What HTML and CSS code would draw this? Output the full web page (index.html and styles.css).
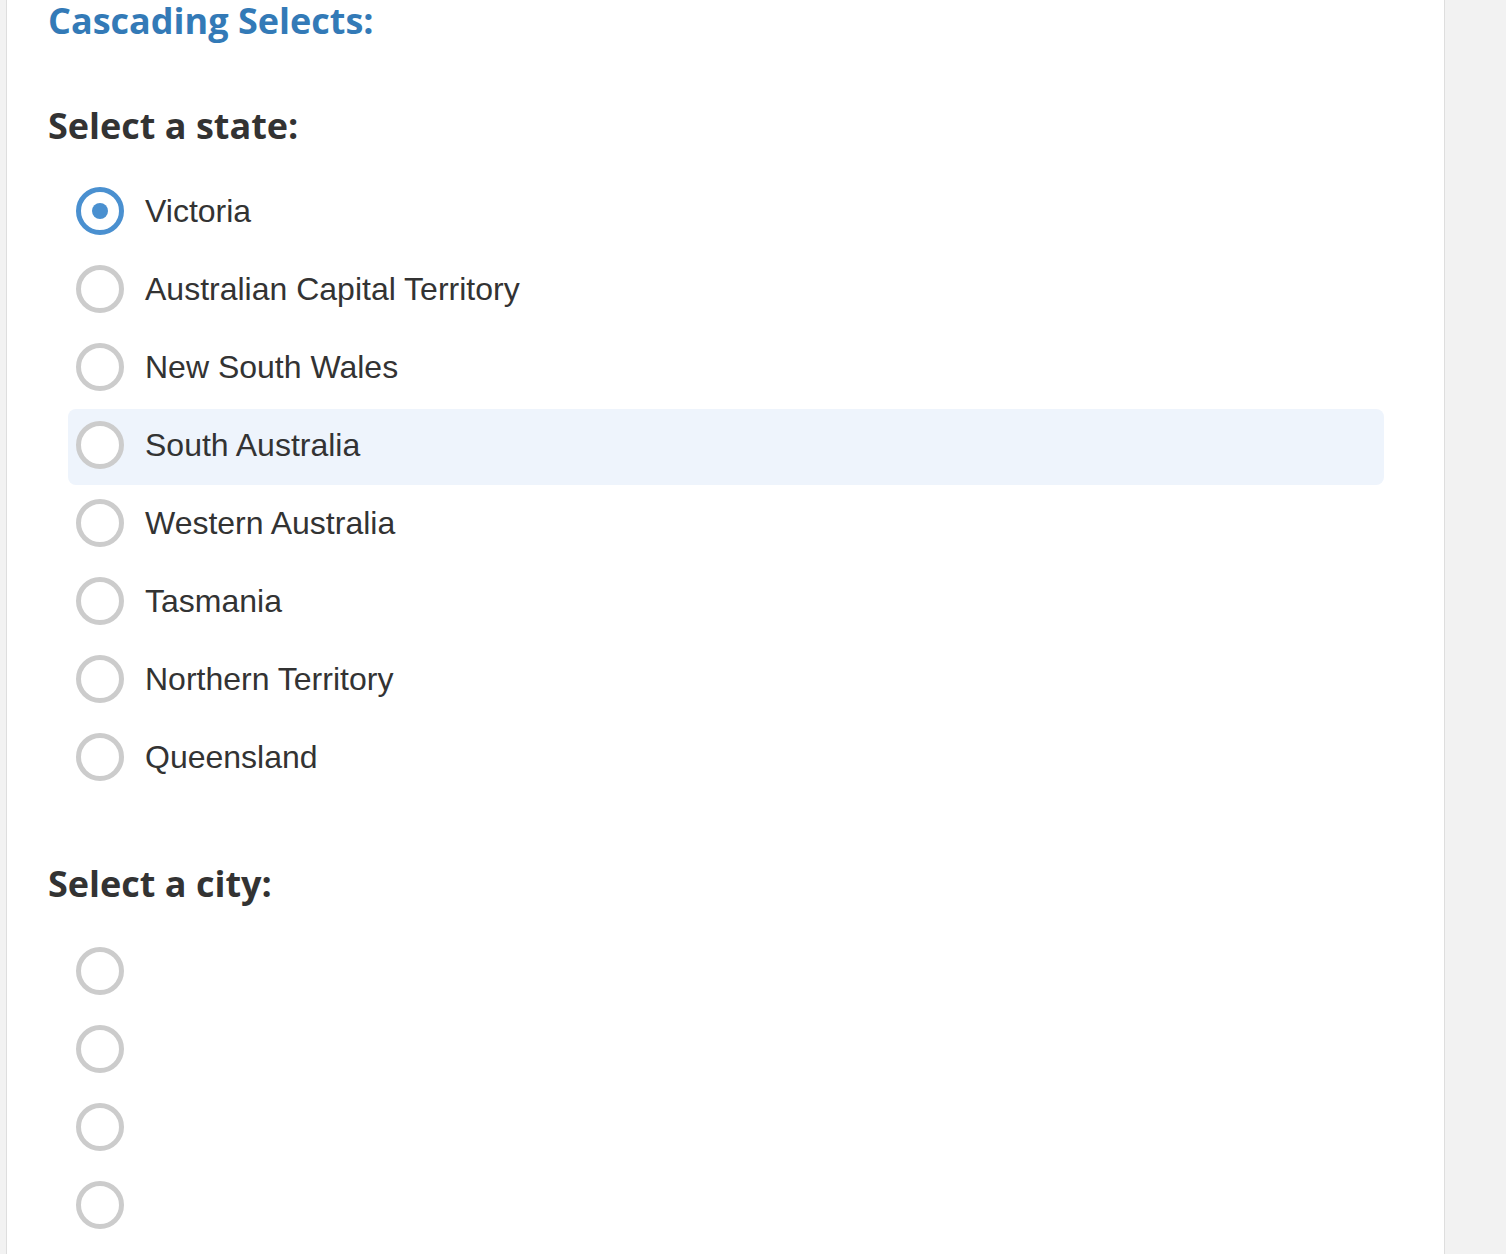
FILE: index.html
```html
<!DOCTYPE html>
<html lang="en">
<head>
  <meta charset="UTF-8" />
  <title>Cascading Selects</title>
  <link rel="stylesheet" href="styles.css">
</head>
<body>
  <div class="panel">
    <h2 class="title">Cascading Selects:</h2>

    <h3 class="group-title">Select a state:</h3>
    <div class="options">
      <label class="option"><input type="radio" name="state" checked><span>Victoria</span></label>
      <label class="option"><input type="radio" name="state"><span>Australian Capital Territory</span></label>
      <label class="option"><input type="radio" name="state"><span>New South Wales</span></label>
      <label class="option hover"><input type="radio" name="state"><span>South Australia</span></label>
      <label class="option"><input type="radio" name="state"><span>Western Australia</span></label>
      <label class="option"><input type="radio" name="state"><span>Tasmania</span></label>
      <label class="option"><input type="radio" name="state"><span>Northern Territory</span></label>
      <label class="option"><input type="radio" name="state"><span>Queensland</span></label>
    </div>

    <h3 class="group-title city">Select a city:</h3>
    <div class="options">
      <label class="option"><input type="radio" name="city"><span></span></label>
      <label class="option"><input type="radio" name="city"><span></span></label>
      <label class="option"><input type="radio" name="city"><span></span></label>
      <label class="option"><input type="radio" name="city"><span></span></label>
    </div>
  </div>
</body>
</html>
```

FILE: styles.css
```css
body {
  margin: 0;
  background: #f2f2f2;
  font-family: "Liberation Sans", Arial, sans-serif;
  color: #333;
}
.panel {
  width: 1356px;
  min-height: 1254px;
  margin-left: 6px;
  padding: 0 40px 0 41px;
  background: #fff;
  border-left: 1px solid #dedede;
  border-right: 1px solid #dedede;
}
.title {
  margin: 0 0 63px;
  font-family: "Open Sans", sans-serif;
  font-size: 36px;
  line-height: 42px;
  font-weight: 700;
  color: #337ab7;
}
.group-title {
  margin: 0 0 28px;
  font-family: "Open Sans", sans-serif;
  font-size: 36px;
  line-height: 42px;
  font-weight: 700;
  color: #333;
}
.group-title.city {
  margin-bottom: 30px;
}
.options {
  margin: 0 20px 66px;
}
.option {
  display: flex;
  align-items: center;
  gap: 21px;
  height: 48px;
  padding: 12px 8px 16px;
  margin-bottom: 2px;
  border-radius: 8px;
  font-size: 32px;
  cursor: pointer;
}
.option.hover {
  background: #eef4fc;
}
.option input {
  appearance: none;
  -webkit-appearance: none;
  flex: none;
  width: 48px;
  height: 48px;
  margin: 0;
  border: 5px solid #cccccc;
  border-radius: 50%;
  background: #fff;
  position: relative;
}
.option input:checked {
  border-color: #4a90d0;
}
.option input:checked::after {
  content: "";
  position: absolute;
  top: 11px;
  left: 11px;
  width: 16px;
  height: 16px;
  border-radius: 50%;
  background: #4a90d0;
}
```
